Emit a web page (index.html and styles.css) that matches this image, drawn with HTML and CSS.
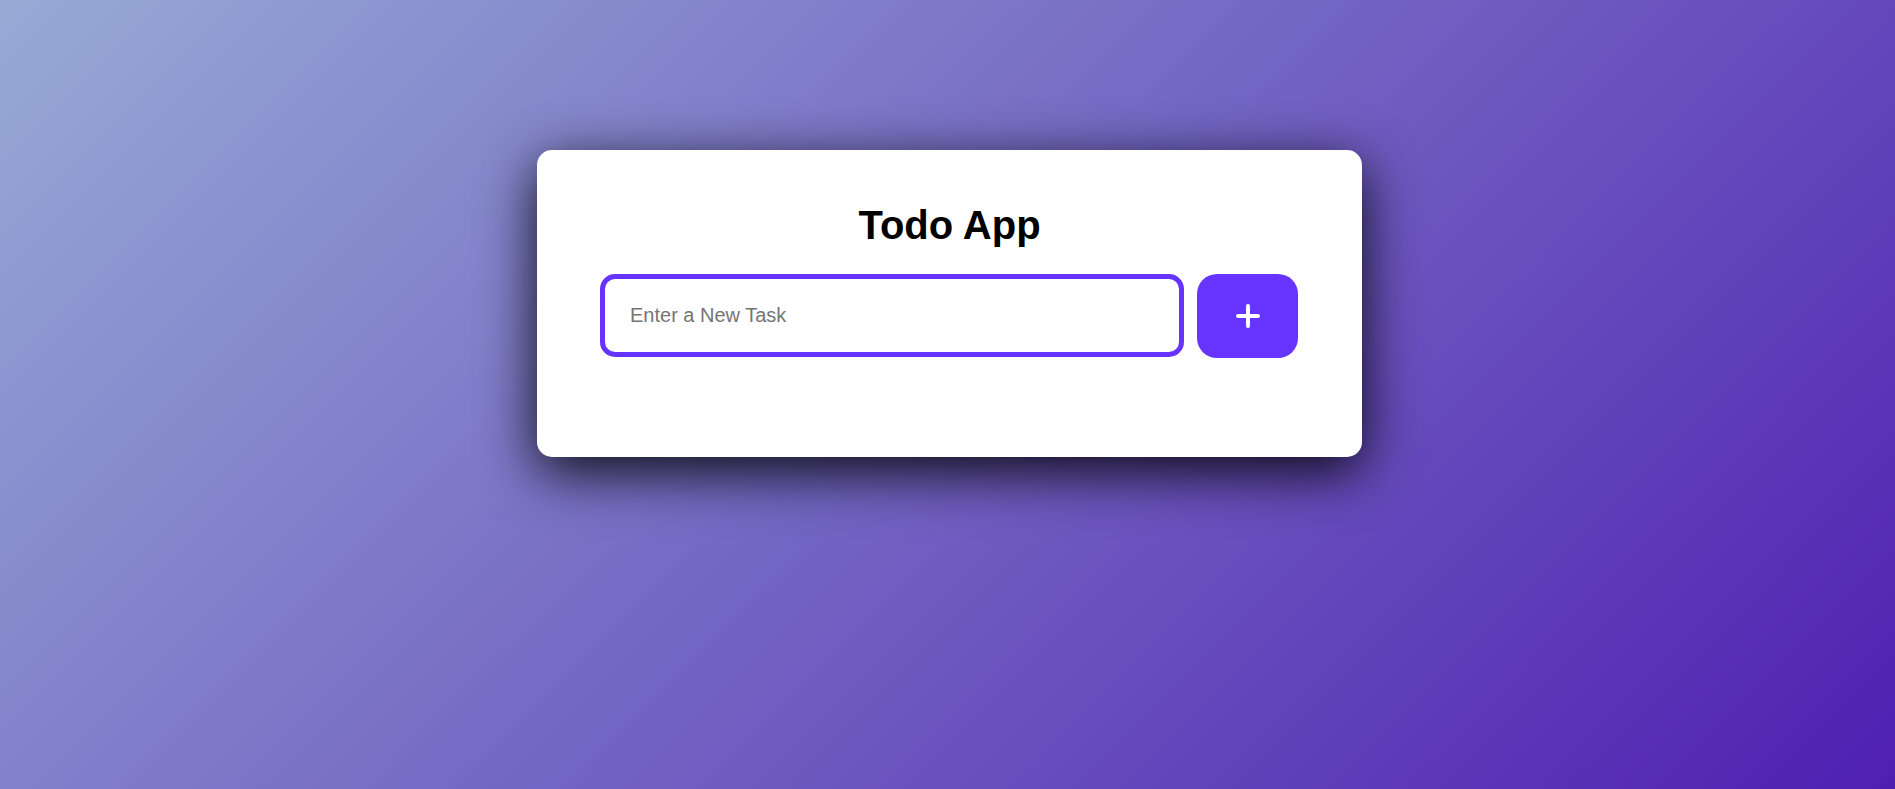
FILE: index.html
```html
<!DOCTYPE html>
<html lang="en">
<head>
    <meta charset="UTF-8">
    <meta name="viewport" content="width=device-width, initial-scale=1.0">
    <title>Todo App</title>
    <link rel="stylesheet" href="styles.css">
</head>
<body>

<div class="container">
    <h1>Todo App</h1>

    <div class="input-row">
        <input type="text" id="task-input" placeholder="Enter a New Task">
        <button class="add-btn" aria-label="Add task">
            <!-- plus icon -->
            <svg width="24" height="24" viewBox="0 0 24 24">
                <line x1="12" y1="2" x2="12" y2="22" stroke="#fff" stroke-width="4" stroke-linecap="round"/>
                <line x1="2" y1="12" x2="22" y2="12" stroke="#fff" stroke-width="4" stroke-linecap="round"/>
            </svg>
        </button>
    </div>

    <ul class="task-list" id="task-list"></ul>
</div>

</body>
</html>
```

FILE: styles.css
```css
body {
    margin: 0;
    padding: 150px 0 0 4px;
    min-height: 100vh;
    box-sizing: border-box;
    font-family: "Liberation Sans", Arial, sans-serif;
    background: linear-gradient(135deg, #97aad5, #4f1fb1);
    display: flex;
    flex-direction: column;
    align-items: center;
}

.container {
    width: 825px;
    box-sizing: border-box;
    padding: 53px 63px 99px;
    background-color: white;
    border-radius: 15px;
    box-shadow: 0 15px 55px rgba(0, 0, 0, 0.9); /* heavy dark glow */
}

.container h1 {
    margin: 0 0 26px;
    font-size: 40px;
    font-weight: bold;
    text-align: center;
    color: black;
}

.input-row {
    display: flex;
    gap: 13px;
}

.input-row input {
    width: 584px;
    height: 83px;
    box-sizing: border-box;
    padding: 0 25px;
    font-family: inherit;
    font-size: 20px;
    border: 5px solid #6633ff;
    border-radius: 15px;
    outline: none;
}

.input-row input::placeholder {
    color: #757575;
}

.add-btn {
    width: 101px;
    height: 84px;
    border: none;
    border-radius: 20px;
    background-color: #6633ff;
    display: flex;
    align-items: center;
    justify-content: center;
    cursor: pointer;
    padding: 0;
}

.task-list {
    list-style: none;
    margin: 0;
    padding: 0;
}
```
